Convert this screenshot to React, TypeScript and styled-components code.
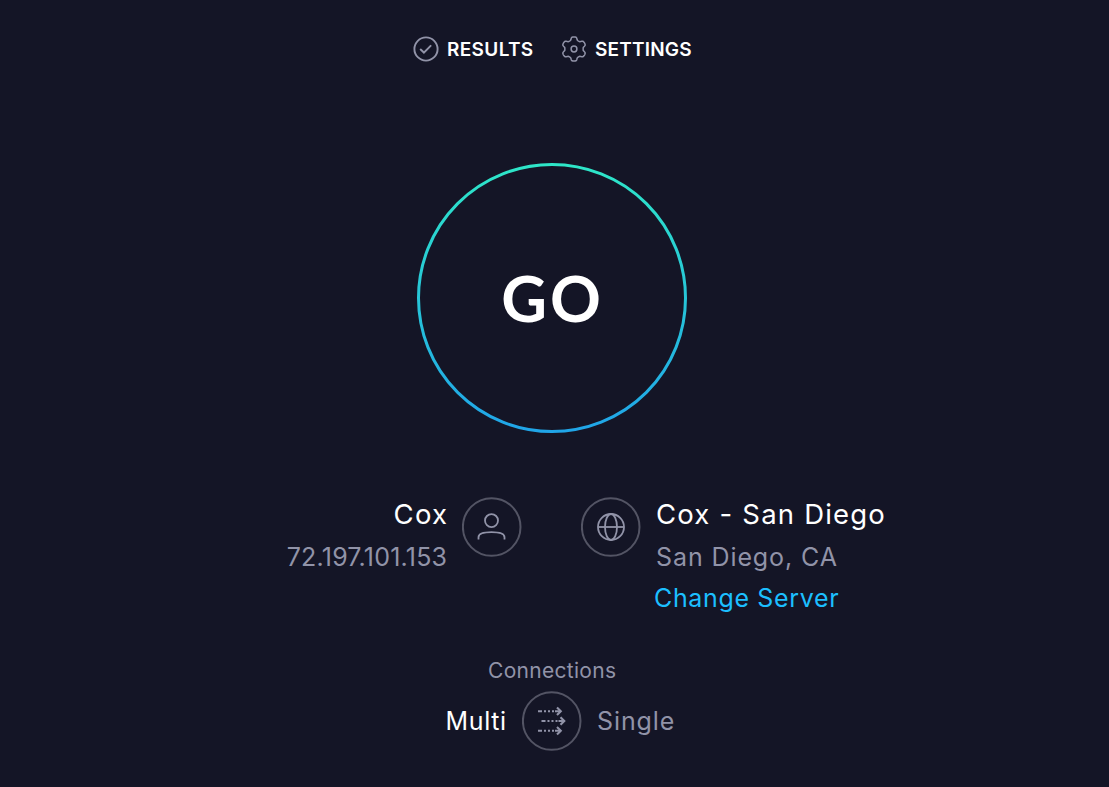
import React from "react";
import styled, { createGlobalStyle } from "styled-components";

const GlobalStyle = createGlobalStyle`
  * { box-sizing: border-box; }
  body {
    margin: 0;
    background: #141526;
    font-family: Inter, "Liberation Sans", sans-serif;
  }
  svg { display: block; flex: none; }
`;

const Page = styled.main`
  width: 1109px;
  height: 787px;
  overflow: hidden;
  background: #141526;
  display: flex;
  flex-direction: column;
`;

const Nav = styled.nav`
  display: flex;
  align-items: center;
  height: 28px;
  margin-top: 35px;
  padding-left: 413px;
`;

const NavItem = styled.a<{ $width: number }>`
  display: flex;
  align-items: center;
  gap: 8px;
  width: ${(p) => p.$width}px;
`;

const Label = styled.span<{
  $size: number;
  $line: number;
  $spacing?: number;
  $tone?: "bright" | "muted" | "link";
  $weight?: number;
}>`
  display: block;
  white-space: nowrap;
  font-size: ${(p) => p.$size}px;
  line-height: ${(p) => p.$line}px;
  letter-spacing: ${(p) => p.$spacing ?? 0}px;
  margin-right: ${(p) => -(p.$spacing ?? 0)}px;
  font-weight: ${(p) => p.$weight ?? 400};
  color: ${(p) => (p.$tone === "muted" ? "#9193a8" : p.$tone === "link" ? "#1cbfff" : "#ffffff")};
`;

const NavLabel = styled(Label)`
  padding-top: 2px;
`;

const GoLabel = styled(Label)`
  font-family: Lato, Inter, sans-serif;
  padding: 0 2px 1px 0;
`;

const ChangeLink = styled(Label)`
  margin-left: -2px;
`;

const GoButton = styled.button`
  display: grid;
  width: 270px;
  height: 270px;
  margin: 100px 0 0 417px;
  padding: 0;
  border: 0;
  background: none;
  place-items: center;

  > * { grid-area: 1 / 1; }
`;

const Servers = styled.section`
  display: grid;
  grid-template-columns: 447px 60px 60px 1fr;
  column-gap: 15px;
  margin-top: 64px;
  height: 116px;
`;

const Host = styled.div<{ $align: "left" | "right" }>`
  display: flex;
  flex-direction: column;
  align-items: ${(p) => (p.$align === "right" ? "flex-end" : "flex-start")};
`;

const ServerBadge = styled.div`
  margin-left: 44px;
`;

const HostRight = styled(Host)`
  padding-left: 44px;
`;

const Connections = styled.section`
  display: flex;
  flex-direction: column;
  margin-top: 45px;
`;

const ConnectionsTitle = styled.div`
  padding-left: 488px;
`;

const Modes = styled.div`
  display: grid;
  grid-template-columns: 506px 60px 1fr;
  column-gap: 15.5px;
  align-items: center;
  margin-top: 7px;
`;

const ModeLeft = styled.div`
  display: flex;
  justify-content: flex-end;
`;

const ring = "#535464";
const icon = "#9193a8";

// Six-toothed gear outline centred on (13, 14), one tooth pointing up.
const gearOutline =
  "M" +
  Array.from({ length: 120 }, (_, i) => {
    const angle = (i / 120) * Math.PI * 2;
    const radius = 10.6 + 1.5 * Math.tanh(2.2 * Math.cos(6 * angle) + 0.2);
    return `${(13 + radius * Math.sin(angle)).toFixed(2)} ${(14 - radius * Math.cos(angle)).toFixed(2)}`;
  }).join("L") +
  "Z";

function Badge({ children }: { children: React.ReactNode }) {
  return (
    <svg width="60" height="60" viewBox="0 0 60 60" fill="none" stroke={icon} strokeWidth="1.8">
      <circle cx="29.7" cy="30" r="28.8" stroke={ring} strokeWidth="2" />
      {children}
    </svg>
  );
}

function Arrow({ x, y }: { x: number; y: number }) {
  return (
    <>
      <path d={`M${x} ${y}h4M${x + 6} ${y}h2M${x + 10} ${y}h2M${x + 14} ${y}h2M${x + 17} ${y}h6`} strokeWidth="2" />
      <path d={`M${x + 19} ${y - 3.8}l3.8 3.8l-3.8 3.8`} strokeWidth="2.1" />
    </>
  );
}

export default function App() {
  return (
    <>
      <GlobalStyle />
      <Page>
        <Nav>
          <NavItem $width={148}>
            <svg width="26" height="28" viewBox="0 0 26 28" fill="none" stroke={icon}>
              <circle cx="13" cy="14" r="11.6" strokeWidth="1.9" />
              <path d="M7.7 14.6l3.2 3 6.7-6.7" strokeWidth="2" strokeLinecap="round" />
            </svg>
            <NavLabel $size={19} $line={28} $weight={600} $spacing={0.35}>RESULTS</NavLabel>
          </NavItem>
          <NavItem $width={140}>
            <svg width="26" height="28" viewBox="0 0 26 28" fill="none" stroke={icon} strokeWidth="1.5" strokeLinejoin="round">
              <path d={gearOutline} />
              <circle cx="13" cy="14" r="2.9" />
            </svg>
            <NavLabel $size={19} $line={28} $weight={600} $spacing={0.2}>SETTINGS</NavLabel>
          </NavItem>
        </Nav>

        <GoButton>
          <svg width="270" height="270" viewBox="0 0 270 270" fill="none">
            <defs>
              <linearGradient id="go-ring" x1="0" y1="0" x2="0" y2="1">
                <stop offset="0" stopColor="#2ee6c8" />
                <stop offset="1" stopColor="#20a5e8" />
              </linearGradient>
            </defs>
            <circle cx="135" cy="135" r="133.5" stroke="url(#go-ring)" strokeWidth="3" />
          </svg>
          <GoLabel $size={63} $line={62} $weight={700} $spacing={3}>GO</GoLabel>
        </GoButton>

        <Servers>
          <Host $align="right">
            <Label $size={27.5} $line={35} $spacing={1.2}>Cox</Label>
            <Label $size={25} $line={51} $spacing={0.2} $tone="muted">72.197.101.153</Label>
          </Host>
          <Badge>
            <circle cx="29.5" cy="23.6" r="6.5" />
            <path d="M16.5 42.5v-2.2c0-3.4 5-5.1 13-5.1s13 1.7 13 5.1v2.2" />
          </Badge>
          <ServerBadge>
            <Badge>
              <circle cx="30" cy="30" r="13" />
              <ellipse cx="30" cy="30" rx="6" ry="13" />
              <path d="M17 30h26" />
            </Badge>
          </ServerBadge>
          <HostRight $align="left">
            <Label $size={27.5} $line={35} $spacing={1.2}>Cox - San Diego</Label>
            <Label $size={25} $line={51} $spacing={0.9} $tone="muted">San Diego, CA</Label>
            <ChangeLink as="a" $size={25} $line={31} $spacing={0.65} $tone="link">Change Server</ChangeLink>
          </HostRight>
        </Servers>

        <Connections>
          <ConnectionsTitle>
            <Label $size={21} $line={26} $spacing={0.3} $tone="muted">Connections</Label>
          </ConnectionsTitle>
          <Modes>
            <ModeLeft>
              <Label $size={25} $line={60} $spacing={0.6}>Multi</Label>
            </ModeLeft>
            <Badge>
              <Arrow x={16} y={20.3} />
              <Arrow x={19.5} y={30} />
              <Arrow x={16} y={39.7} />
            </Badge>
            <Label $size={25} $line={60} $spacing={0.9} $tone="muted">Single</Label>
          </Modes>
        </Connections>
      </Page>
    </>
  );
}
